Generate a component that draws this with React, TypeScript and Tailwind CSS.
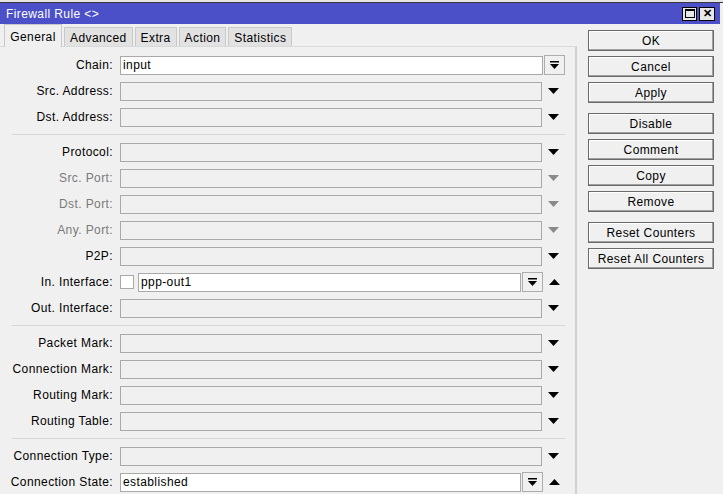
import React from "react";

type Row =
  | { kind: "sep" }
  | {
      kind: "field";
      label: string;
      value?: string;
      dim?: boolean;
      combo?: boolean;
      check?: boolean;
      up?: boolean;
    };

const rows: Row[] = [
  { kind: "field", label: "Chain:", value: "input", combo: true },
  { kind: "field", label: "Src. Address:" },
  { kind: "field", label: "Dst. Address:" },
  { kind: "sep" },
  { kind: "field", label: "Protocol:" },
  { kind: "field", label: "Src. Port:", dim: true },
  { kind: "field", label: "Dst. Port:", dim: true },
  { kind: "field", label: "Any. Port:", dim: true },
  { kind: "field", label: "P2P:" },
  { kind: "field", label: "In. Interface:", value: "ppp-out1", check: true, up: true },
  { kind: "field", label: "Out. Interface:" },
  { kind: "sep" },
  { kind: "field", label: "Packet Mark:" },
  { kind: "field", label: "Connection Mark:" },
  { kind: "field", label: "Routing Mark:" },
  { kind: "field", label: "Routing Table:" },
  { kind: "sep" },
  { kind: "field", label: "Connection Type:" },
  { kind: "field", label: "Connection State:", value: "established", check: false, up: true },
];

const tabs = ["General", "Advanced", "Extra", "Action", "Statistics"];

const buttonGroups = [
  ["OK", "Cancel", "Apply"],
  ["Disable", "Comment", "Copy", "Remove"],
  ["Reset Counters", "Reset All Counters"],
];

function Arrow({ up, dim }: { up?: boolean; dim?: boolean }) {
  return (
    <svg width="11" height="6" viewBox="0 0 11 6">
      <polygon
        points={up ? "0,6 11,6 5.5,0" : "0,0 11,0 5.5,6"}
        fill={dim ? "#8a8a8a" : "#000"}
      />
    </svg>
  );
}

function ComboButton() {
  return (
    <div className="flex h-[20px] w-[21px] items-center justify-center border border-[#adadad] bg-[#f0f0f0]">
      <svg width="9" height="9" viewBox="0 0 9 9">
        <rect x="0" y="0" width="9" height="1.5" fill="#000" />
        <polygon points="0,3 9,3 4.5,8" fill="#000" />
      </svg>
    </div>
  );
}

function Field({ row }: { row: Extract<Row, { kind: "field" }> }) {
  const white = row.value !== undefined;
  const box = (
    <div
      className={`flex h-[19px] flex-1 items-center border border-[#a9a9a9] px-[2px] ${
        white ? "bg-white" : "bg-[#f0f0f0]"
      }`}
    >
      {row.value}
    </div>
  );
  return (
    <div className="flex h-[26px] items-center">
      <div
        className={`w-[113px] shrink-0 text-right ${
          row.dim ? "text-[#7a7a7a]" : "text-black"
        }`}
      >
        {row.label}
      </div>
      <div className="ml-[7px] flex flex-1 items-center">
        {row.combo ? (
          <>
            {box}
            <div className="ml-[1px]">
              <ComboButton />
            </div>
          </>
        ) : row.up ? (
          <>
            {row.check && (
              <div className="mr-[4px] h-[14px] w-[14px] border border-[#a9a9a9] bg-white" />
            )}
            {box}
            <div className="ml-[1px]">
              <ComboButton />
            </div>
            <div className="flex w-[22px] justify-center">
              <Arrow up />
            </div>
          </>
        ) : (
          <>
            {box}
            <div className="flex w-[23px] justify-center">
              <Arrow dim={row.dim} />
            </div>
          </>
        )}
      </div>
    </div>
  );
}

export default function App() {
  return (
    <div
      className="h-[494px] w-[723px] overflow-hidden bg-[#f0f0f0] text-[12px] tracking-[0.4px] text-black"
      style={{ fontFamily: '"Liberation Sans", Arial, sans-serif' }}
    >
      <div className="h-[3px] border-b border-[#3a3a3a] bg-[#e6e6e6]" />
      <div className="mr-[3px] flex h-[21px] items-center justify-between bg-[#4b50c8] pl-[6px] pr-[5px] text-white">
        <span>Firewall Rule &lt;&gt;</span>
        <div className="flex gap-[2px]">
          <div className="flex h-[14px] w-[15px] items-center justify-center border border-black bg-[#e8e8e8]">
            <div className="h-[9px] w-[10px] border-[1.5px] border-t-[2px] border-black" />
          </div>
          <div className="flex h-[14px] w-[16px] items-center justify-center border border-black bg-[#e8e8e8] text-[11px] font-bold leading-none tracking-normal text-black">
            ✕
          </div>
        </div>
      </div>
      <div className="flex h-[470px]">
        <div className="flex w-[577px] flex-col">
          <div className="flex h-[23px] items-end pl-[4px]">
            {tabs.map((t, i) =>
              i === 0 ? (
                <div
                  key={t}
                  className="relative z-10 -mb-[1px] flex h-[23px] w-[58px] items-center justify-center border border-b-0 border-[#c9c9c9] bg-[#f0f0f0] pt-[1px]"
                >
                  {t}
                </div>
              ) : (
                <div
                  key={t}
                  className="ml-[2px] flex h-[19px] items-center border border-b-0 border-[#c9c9c9] bg-[#e2e2e2] px-[5px] pt-[2px]"
                >
                  {t}
                </div>
              )
            )}
          </div>
          <div className="flex flex-1 border-r-2 border-t border-r-[#d0d0d0] border-t-[#d9d9d9] pr-[10px] pt-[5px]">
            <div className="flex w-full flex-col">
              {rows.map((r, i) =>
                r.kind === "sep" ? (
                  <div key={i} className="flex h-[9px] items-center pl-[12px]">
                    <div className="h-px w-full bg-[#d6d6d6]" />
                  </div>
                ) : (
                  <Field key={i} row={r} />
                )
              )}
            </div>
          </div>
        </div>
        <div className="flex w-[143px] flex-col gap-[10px] pl-[11px] pt-[6px]">
          {buttonGroups.map((g, gi) => (
            <div key={gi} className="flex flex-col gap-[5px]">
              {g.map((b) => (
                <div
                  key={b}
                  className="flex h-[21px] w-[126px] items-center justify-center border border-[#6a6a6a] bg-[#f0f0f0] shadow-[inset_-1px_-1px_0_#a0a0a0,inset_1px_1px_0_#ffffff]"
                >
                  {b}
                </div>
              ))}
            </div>
          ))}
        </div>
      </div>
    </div>
  );
}
